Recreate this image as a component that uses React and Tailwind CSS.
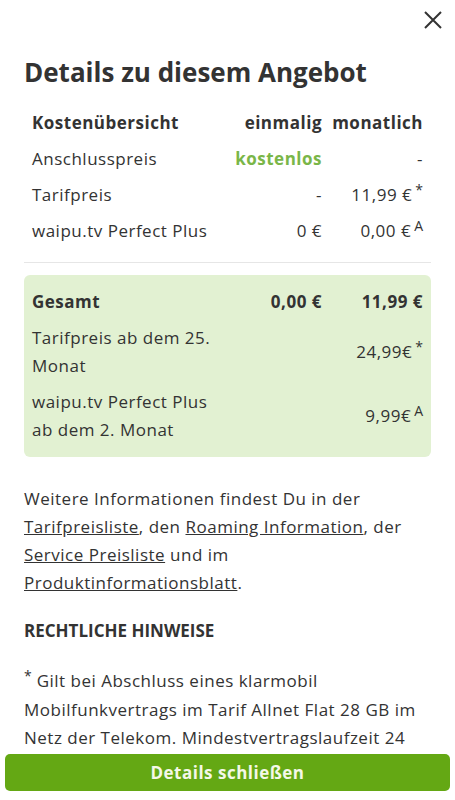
const rows = [
  { label: "Anschlusspreis", once: "kostenlos", green: true, monthly: "-" },
  { label: "Tarifpreis", once: "-", monthly: "11,99 €", sup: "*" },
  { label: "waipu.tv Perfect Plus", once: "0 €", monthly: "0,00 €", sup: "A" },
];

const Sup = ({ children, className = "ml-[3px]" }) => (
  <span className={`relative -top-[6px] text-[14px] tracking-normal ${className}`}>
    {children}
  </span>
);

const App = () => {
  return (
    <div
      className="w-[455px] h-[800px] flex flex-col bg-white text-[#333] overflow-hidden tracking-[0.5px]"
      style={{ fontFamily: '"Open Sans", "Liberation Sans", sans-serif' }}
    >
      <div className="flex-1 overflow-hidden">
        {/* close */}
        <div className="flex justify-end pt-[11px] pr-[13px]">
          <button className="w-[18px] h-[18px] text-[#333]">
            <svg viewBox="0 0 18 18" width="18" height="18" fill="none" stroke="currentColor" strokeWidth="2">
              <path d="M1 1L17 17M17 1L1 17" />
            </svg>
          </button>
        </div>

        <div className="px-6">
          <h1 className="text-[26px] font-bold leading-9 mt-[25px] tracking-normal">
            Details zu diesem Angebot
          </h1>

          {/* cost table */}
          <div className="mt-[15px] px-2 text-[17px]">
            <div className="flex h-9 items-center font-bold">
              <div className="flex-1">Kostenübersicht</div>
              <div className="w-[100px] text-right">einmalig</div>
              <div className="w-[101px] text-right">monatlich</div>
            </div>
            {rows.map((r) => (
              <div key={r.label} className="flex h-9 items-center">
                <div className="flex-1">{r.label}</div>
                <div
                  className={
                    r.green
                      ? "w-[100px] text-right font-bold text-[#7ab648]"
                      : "w-[100px] text-right"
                  }
                >
                  {r.once}
                </div>
                <div className="w-[101px] text-right">
                  {r.monthly}
                  {r.sup && <Sup>{r.sup}</Sup>}
                </div>
              </div>
            ))}
          </div>

          <div className="mt-[13px] h-px bg-[#e6e6e6]" />

          {/* total box */}
          <div className="mt-3 rounded-md bg-[#e2f1d2] px-2 py-[9px] text-[17px] leading-7">
            <div className="flex items-center py-1 font-bold">
              <div className="flex-1">Gesamt</div>
              <div className="w-[100px] text-right">0,00 €</div>
              <div className="w-[101px] text-right">11,99 €</div>
            </div>
            <div className="flex items-center py-1">
              <div className="flex-1">
                Tarifpreis ab dem 25.
                <br />
                Monat
              </div>
              <div className="w-[101px] text-right">
                24,99€<Sup>*</Sup>
              </div>
            </div>
            <div className="flex items-center py-1">
              <div className="flex-1">
                waipu.tv Perfect Plus
                <br />
                ab dem 2. Monat
              </div>
              <div className="w-[101px] text-right">
                9,99€<Sup>A</Sup>
              </div>
            </div>
          </div>

          <p className="mt-7 text-[17px] leading-7 whitespace-nowrap">
            Weitere Informationen findest Du in der
            <br />
            <a className="underline">Tarifpreisliste</a>, den{" "}
            <a className="underline">Roaming Information</a>, der
            <br />
            <a className="underline">Service Preisliste</a> und im
            <br />
            <a className="underline">Produktinformationsblatt</a>.
          </p>

          <h2 className="mt-5 text-[17px] leading-7 font-bold tracking-normal">
            RECHTLICHE HINWEISE
          </h2>

          <p className="mt-[22px] text-[17px] leading-7 whitespace-nowrap">
            <Sup className="">*</Sup> Gilt bei Abschluss eines klarmobil
            <br />
            Mobilfunkvertrags im Tarif Allnet Flat 28 GB im
            <br />
            Netz der Telekom. Mindestvertragslaufzeit 24
          </p>
        </div>
      </div>

      {/* footer */}
      <div className="px-[5px] pt-[6px] pb-[9px] bg-white">
        <button className="w-full h-[37px] rounded-[5px] bg-[#64a814] text-[#f4f8e8] text-[17px] font-bold">
          Details schließen
        </button>
      </div>
    </div>
  );
};

export default App;
